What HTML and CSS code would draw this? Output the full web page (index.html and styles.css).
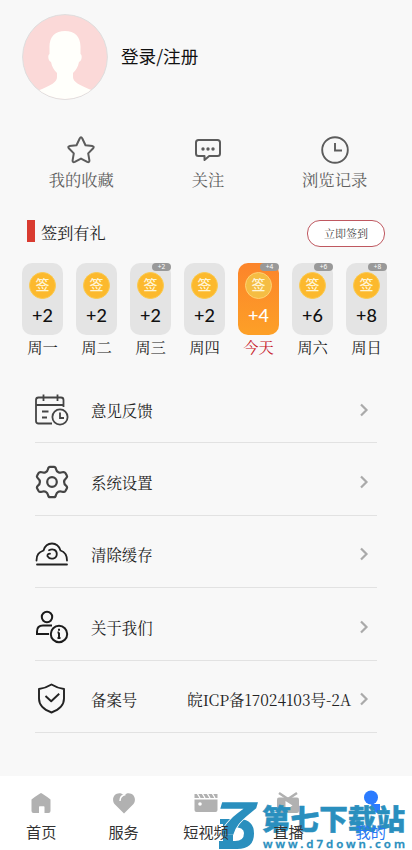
FILE: index.html
```html
<!DOCTYPE html>
<html lang="zh-CN">
<head>
<meta charset="utf-8">
<meta name="viewport" content="width=device-width, initial-scale=1">
<title>我的</title>
<link rel="stylesheet" href="styles.css">
</head>
<body>
<main class="page">
  <header class="profile">
    <svg class="avatar" viewBox="0 0 86 86">
      <defs><clipPath id="round"><circle cx="43" cy="43" r="42"/></clipPath></defs>
      <circle cx="43" cy="43" r="42.400" fill="#fbd9d8" stroke="#dedede" stroke-width="1"/>
      <path clip-path="url(#round)" fill="#fffffb" d="M43 17c-10 0-16 6-15.500 17v6c-2 1-1.500 7 1.500 8 1 5 3 8 6 11v4c0 5-5 8-20 14v12h57V77C57 71 51 68 51 63v-4c3-3 5-6 6-11 3-1 3.500-7 1.500-8v-6C59 23 53 17 43 17z"/>
    </svg>
    <span class="login">登录/注册</span>
  </header>

  <nav class="shortcuts">
    <a class="shortcut">
      <svg width="30" height="30" viewBox="0 0 30 30" fill="none" stroke="#5c5c5c" stroke-width="2" stroke-linejoin="round"><path d="M13.700 3.500q1.300-2.300 2.600 0l3.200 6.700 7 .9q2 .5.700 2.200l-5 5.100 1.200 7q0 2.400-2.200 1.500L15 23.600l-6.200 3.300q-2.200.9-2.200-1.500l1.200-7-5-5.100q-1.300-1.700.7-2.200l7-.9z"/></svg>
      <span>我的收藏</span>
    </a>
    <a class="shortcut">
      <svg width="30" height="30" viewBox="0 0 30 30" fill="none" stroke="#5c5c5c" stroke-width="2" stroke-linejoin="round"><path d="M5.500 5h19q2.500 0 2.500 2.500v11q0 2.500-2.500 2.500h-8.300L11.500 25v-4h-6Q3 21 3 18.500v-11Q3 5 5.500 5z"/><g fill="#5c5c5c" stroke="none"><circle cx="10" cy="14" r="1.700"/><circle cx="15" cy="14" r="1.700"/><circle cx="20" cy="14" r="1.700"/></g></svg>
      <span>关注</span>
    </a>
    <a class="shortcut">
      <svg width="30" height="30" viewBox="0 0 30 30" fill="none" stroke="#5c5c5c" stroke-width="1.900"><circle cx="15" cy="15" r="12.800"/><path d="M15 8v7.500h7"/></svg>
      <span>浏览记录</span>
    </a>
  </nav>

  <section class="checkin">
    <div class="checkin-head">
      <h2><span>签到有礼</span></h2>
      <button class="sign-button">立即签到</button>
    </div>
    <div class="days">
      <div class="day"><div class="card"><i class="coin">签</i><b>+2</b></div><span>周一</span></div>
      <div class="day"><div class="card"><i class="coin">签</i><b>+2</b></div><span>周二</span></div>
      <div class="day"><div class="card"><em>+2</em><i class="coin">签</i><b>+2</b></div><span>周三</span></div>
      <div class="day"><div class="card"><i class="coin">签</i><b>+2</b></div><span>周四</span></div>
      <div class="day today"><div class="card"><em>+4</em><i class="coin">签</i><b>+4</b></div><span>今天</span></div>
      <div class="day"><div class="card"><em>+6</em><i class="coin">签</i><b>+6</b></div><span>周六</span></div>
      <div class="day"><div class="card"><em>+8</em><i class="coin">签</i><b>+8</b></div><span>周日</span></div>
    </div>
  </section>

  <section class="menu">
    <a class="row">
      <svg class="icon" viewBox="0 0 34 34" stroke="#444" stroke-width="1.800"><path d="M17 30.500H3.500Q1 30.500 1 28V7q0-2.500 2.500-2.500H26q2.500 0 2.500 2.500v7M1 12h27.500M8.500 1.500V8M22.500 1.500V8M7 18.500h6.500M7 24.500h5"/><circle cx="25" cy="24" r="7.600"/><path d="M25 19.500V25h4"/></svg>
      <span>意见反馈</span>
      <svg class="chevron" viewBox="0 0 10 14"><path d="M2 1.500 7.500 7 2 12.500"/></svg>
    </a>
    <a class="row">
      <svg class="icon" viewBox="0 0 34 34" stroke="#444" stroke-width="2.200" stroke-linejoin="round"><path d="M15 1.800h4q1.500 0 1.900 2 .5 2.500 2.500 3.500 1.600.8 3.800 0 2.300-.8 3.200.7l1.400 2.600q.8 1.400-.8 2.700-1.900 1.500-1.900 3.700t1.900 3.700q1.600 1.300.8 2.700l-1.400 2.600q-.9 1.500-3.200.7-2.200-.8-3.800 0-2 1-2.500 3.500-.4 2-1.900 2h-4q-1.500 0-1.900-2-.5-2.500-2.500-3.500-1.600-.8-3.800 0-2.300.8-3.200-.7l-1.400-2.600q-.8-1.400.8-2.700 1.900-1.500 1.900-3.700t-1.900-3.700q-1.600-1.300-.8-2.700L3.600 8q.9-1.500 3.200-.7 2.200.8 3.800 0 2-1 2.500-3.500.4-2 1.900-2z"/><circle cx="17" cy="17" r="4.800"/></svg>
      <span>系统设置</span>
      <svg class="chevron" viewBox="0 0 10 14"><path d="M2 1.500 7.500 7 2 12.500"/></svg>
    </a>
    <a class="row">
      <svg class="icon" viewBox="0 0 34 34" stroke="#222" stroke-width="1.800" stroke-linecap="round"><path d="M2 27.500h30M1.500 23.500C1.500 17 4 15.500 8.500 13.500 10 8.500 13 6.500 17 6.500s7 2.500 8.500 7C30 15 32 18 32 23.500"/><path d="M14 13.200c4-2 7.800 0 7.800 3.800 0 5-6.800 6.300-9.300 2.300M12.500 19.300q-.6-2.600 2.500-2.600"/></svg>
      <span>清除缓存</span>
      <svg class="chevron" viewBox="0 0 10 14"><path d="M2 1.500 7.500 7 2 12.500"/></svg>
    </a>
    <a class="row">
      <svg class="icon" viewBox="0 0 34 34" stroke="#1c1c1c" stroke-width="2"><circle cx="12" cy="7" r="5.200"/><path d="M14 24H2v-2.500q0-6 6-6h9"/><circle cx="24" cy="24" r="8.200"/><path d="M24 22.500V28M24 18.800v2M22.500 22.500H24M22.500 28h3"/></svg>
      <span>关于我们</span>
      <svg class="chevron" viewBox="0 0 10 14"><path d="M2 1.500 7.500 7 2 12.500"/></svg>
    </a>
    <a class="row">
      <svg class="icon" viewBox="0 0 34 34" stroke="#222" stroke-width="1.900" stroke-linejoin="round"><path d="M16.500 2.500Q22.500 6.200 29 7v9.500q0 9.500-12.500 14Q4 26 4 16.500V7q6.500-.8 12.500-4.500z"/><path d="M10.500 14l5.700 5.300 8-7.600"/></svg>
      <span>备案号</span>
      <span class="value">皖ICP备17024103号-2A</span>
      <svg class="chevron" viewBox="0 0 10 14"><path d="M2 1.500 7.500 7 2 12.500"/></svg>
    </a>
  </section>
</main>

<footer class="tabs">
  <a class="tab"><svg viewBox="0 0 26 26"><path d="M13 3q1 0 9.500 6.500V21q0 2-2 2h-4v-6q0-.7-.7-.7h-4.100q-.7 0-.7.700v6h-5.500q-2 0-2-2V9.500Q12 3 13 3z"/></svg><span>首页</span></a>
  <a class="tab"><svg viewBox="0 0 26 26"><path d="M13 23.500 3.500 14C-1 7.500 6 0 13 5c7-5 14 2.500 9.500 9z"/><path d="M14.500 4.500q-5.500 1-5.500 6.500" fill="none" stroke="#fff" stroke-width="1.500"/></svg><span>服务</span></a>
  <a class="tab"><svg viewBox="0 0 26 26"><path d="M1.500 9.500h23V20q0 2-2 2h-19q-2 0-2-2zM1.500 4h23v4h-23z"/><path d="m4 3 3 5m2-5 3 5m2-5 3 5m2-5 3 5" stroke="#fff" stroke-width="1.300"/><circle cx="7" cy="14" r="1.800" fill="#fff"/></svg><span>短视频</span></a>
  <a class="tab"><svg viewBox="0 0 26 26"><path d="M4 7.500h18q2 0 2 2V21q0 2-2 2H4q-2 0-2-2V9.500q0-2 2-2z"/><path d="m4 3 9 6 9-6" fill="none" stroke="#b1b1b1" stroke-width="2.500"/><path d="m10.500 11 7 4.500-7 4.500z" fill="#fff"/></svg><span>直播</span></a>
  <a class="tab active"><svg viewBox="0 0 26 26"><circle cx="13" cy="7.500" r="7"/><path d="M13 14h9v10q-7-1-9-10z"/></svg><span>我的</span></a>
</footer>

<svg class="watermark" width="194" height="50" viewBox="0 0 194 50">
  <g fill="#2a8fbe">
    <path fill-rule="evenodd" d="M2 19h20q14 1 14 14.500Q36 49 19 49H1v-8h4V24H2zM15 27v14q11 1 11-8 0-6-11-6z"/>
    <text x="-1" y="34" class="mark mark-edge" textLength="37" lengthAdjust="spacingAndGlyphs" aria-hidden="true">7</text>
    <text x="44" y="30" class="site" textLength="143" lengthAdjust="spacingAndGlyphs">第七下载站</text>
    <text x="45" y="48" class="url" textLength="142">www.d7down.com</text>
  </g>
</svg>
</body>
</html>
```
FILE: styles.css
```css
* { box-sizing: border-box; }
body {
  margin: 0;
  height: 850px;
  overflow: hidden;
  display: flex;
  flex-direction: column;
  background: #f8f8f8;
  color: #222;
  font-family: "Noto Serif CJK SC", "Noto Serif SC", "Source Han Serif SC", "Noto Sans CJK SC", serif;
}
.page { flex: 1; }
.profile {
  display: flex;
  align-items: center;
  gap: 13px;
  padding: 14px 22px 0;
}
.avatar { width: 86px; height: 86px; }
.login {
  margin-top: -2px;
  font: 17.600px/24px "Noto Sans CJK SC", sans-serif;
  color: #111;
}
.shortcuts {
  display: grid;
  grid-template-columns: repeat(3, 1fr);
  padding: 35px 14px 0 18px;
}
.shortcut {
  display: flex;
  flex-direction: column;
  align-items: center;
  font-size: 16.300px;
  line-height: 28px;
  color: #5f5f5f;
}
.checkin { padding: 27px 25px 0 22px; }
.checkin-head {
  display: flex;
  justify-content: space-between;
  align-items: center;
  height: 27px;
  padding: 0 2px 0 5px;
}
.checkin h2 {
  margin: 0;
  display: flex;
  align-items: center;
  gap: 6px;
  font-size: 16.200px;
  font-weight: 400;
  line-height: 24px;
}
.checkin h2 span { margin-top: -4px; }
.checkin h2::before {
  content: "";
  width: 8px;
  height: 22px;
  margin-top: -5px;
  background: #d93b30;
}
.sign-button {
  width: 78px;
  height: 27px;
  padding: 0 0 1px;
  border: 1px solid #bf5860;
  border-radius: 13px;
  background: #fff;
  font: inherit;
  font-size: 11px;
  color: #444;
}
.days {
  display: flex;
  justify-content: space-between;
  margin-top: 16px;
}
.day {
  width: 41px;
  display: flex;
  flex-direction: column;
  align-items: center;
  font-size: 15.300px;
  line-height: 22px;
  white-space: nowrap;
}
.card {
  position: relative;
  width: 41px;
  height: 72px;
  padding-top: 9px;
  display: flex;
  flex-direction: column;
  align-items: center;
  border-radius: 10px;
  background: #e4e4e4;
}
.coin {
  width: 27px;
  height: 27px;
  border: 1.500px solid #fbca4e;
  border-radius: 50%;
  background: #fcb92d;
  color: #fff4d3;
  font: 500 14px/23px "Noto Sans CJK SC", sans-serif;
  text-align: center;
}
.card b {
  margin-top: 4px;
  font: 500 18px/24px Lato, sans-serif;
  color: #111;
}
.card em {
  position: absolute;
  top: 0;
  right: 0;
  width: 19px;
  height: 8px;
  border-radius: 4px;
  background: #999;
  color: #fff;
  font: 6.500px/8px "Noto Sans", sans-serif;
  text-align: center;
}
.today { color: #c7202b; }
.today .card { background: linear-gradient(#fc842a, #fda027); }
.today .card b { color: #fff; }
.today .coin { border-color: #ffd274; background: #f5bd43; }
.menu { padding: 14px 35px 0; }
.row {
  display: flex;
  align-items: center;
  height: 72.400px;
  padding: 6px 8px 0 0;
  border-bottom: 1px solid #e2e2e2;
  font-size: 15.400px;
}
.icon {
  width: 34px;
  height: 34px;
  margin-right: 22px;
  fill: none;
}
.value { margin-left: auto; font-size: 15.450px; }
.chevron {
  width: 10px;
  height: 14px;
  margin-left: auto;
  fill: none;
  stroke: #aaa;
  stroke-width: 2.200;
}
.value + .chevron { margin-left: 8px; }
.tabs {
  display: grid;
  grid-template-columns: repeat(5, 1fr);
  height: 74px;
  padding-top: 14px;
  background: #fff;
}
.tab {
  display: flex;
  flex-direction: column;
  align-items: center;
  gap: 3px;
  font: 15.200px/24px "Noto Sans CJK SC", sans-serif;
  color: #333;
}
.tab span { position: relative; z-index: 2; }
.tab svg {
  width: 26px;
  height: 26px;
  fill: #b1b1b1;
}
.tab.active { color: #2878f5; }
.tab.active svg { fill: #2b7bff; }
.watermark {
  position: absolute;
  left: 218px;
  top: 800px;
  z-index: 1;
  overflow: visible;
}
.mark { font: italic 700 45px "Liberation Sans", sans-serif; }
.mark-edge { stroke: #2a8fbe; stroke-width: 1.500px; filter: drop-shadow(1px 0 0 #fff) drop-shadow(-1px 0 0 #fff); }
.site { font: 900 28px "Noto Sans CJK SC", sans-serif; stroke: #2a8fbe; stroke-width: .500px; }
.url { font: 600 11.500px "Noto Sans", sans-serif; stroke: #2a8fbe; stroke-width: .300px; }
```
